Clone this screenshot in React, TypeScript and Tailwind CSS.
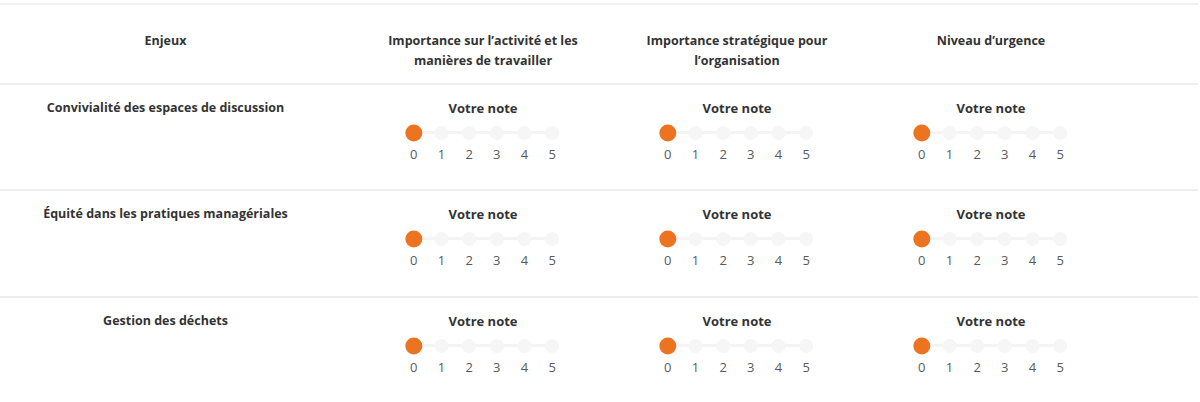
import React from 'react'

const criteria = [
    'Importance sur l’activité et les manières de travailler',
    'Importance stratégique pour l’organisation',
    'Niveau d’urgence',
]

const enjeux = [
    'Convivialité des espaces de discussion',
    'Équité dans les pratiques managériales',
    'Gestion des déchets',
]

const steps = [0, 1, 2, 3, 4, 5]

const Rating: React.FC<{ value: number }> = ({ value }) => (
    <div className="flex flex-col items-center">
        <p className="text-[13px] leading-5 font-bold text-[#333]">Votre note</p>
        <div className="mt-[6px] w-[166px]">
            <svg width="166" height="18" viewBox="0 0 166 18" className="block">
                <rect x="14" y="7" width="138" height="3" fill="#f4f4f4" />
                {steps.map((s) => (
                    <circle key={s} cx={13.8 + s * 27.68} cy="9" r="7" fill="#f6f6f6" />
                ))}
                <circle cx={13.8 + value * 27.68} cy="9" r="8.5" fill="#ec7420" />
            </svg>
            <div className="grid grid-cols-6 mt-[2px]">
                {steps.map((s) => (
                    <span key={s} className="text-center text-[13px] leading-5 text-[#5a5a5a]">
                        {s}
                    </span>
                ))}
            </div>
        </div>
    </div>
)

export default function App() {
    return (
        <div
            className="bg-white w-[1200px] h-[402px] pt-[3px]"
            style={{ fontFamily: '"Open Sans", "Noto Sans", sans-serif' }}
        >
            <div className="border-t-2 border-[#f1f1f1] w-[1198px]">
                <div className="grid grid-cols-[356px_254px_254px_254px] h-[80px] border-b-2 border-[#eeeeee]">
                    <div className="pr-[25px] pt-[26px] text-center text-[12.5px] leading-5 font-bold text-[#333]">
                        Enjeux
                    </div>
                    {criteria.map((c) => (
                        <div
                            key={c}
                            className="px-[26px] pt-[26px] text-center text-[12.5px] leading-5 font-bold text-[#333]"
                        >
                            {c}
                        </div>
                    ))}
                </div>

                {enjeux.map((e, i) => (
                    <div
                        key={e}
                        className={`grid grid-cols-[356px_254px_254px_254px] pt-[13px] ${
                            i === 0 ? 'h-[106px]' : 'h-[107px]'
                        } ${i < enjeux.length - 1 ? 'border-b-2 border-[#eeeeee]' : ''}`}
                    >
                        <div className="pr-[25px] text-center text-[12.5px] leading-5 font-bold text-[#333]">
                            {e}
                        </div>
                        {criteria.map((c) => (
                            <Rating key={c} value={0} />
                        ))}
                    </div>
                ))}
            </div>
        </div>
    )
}
